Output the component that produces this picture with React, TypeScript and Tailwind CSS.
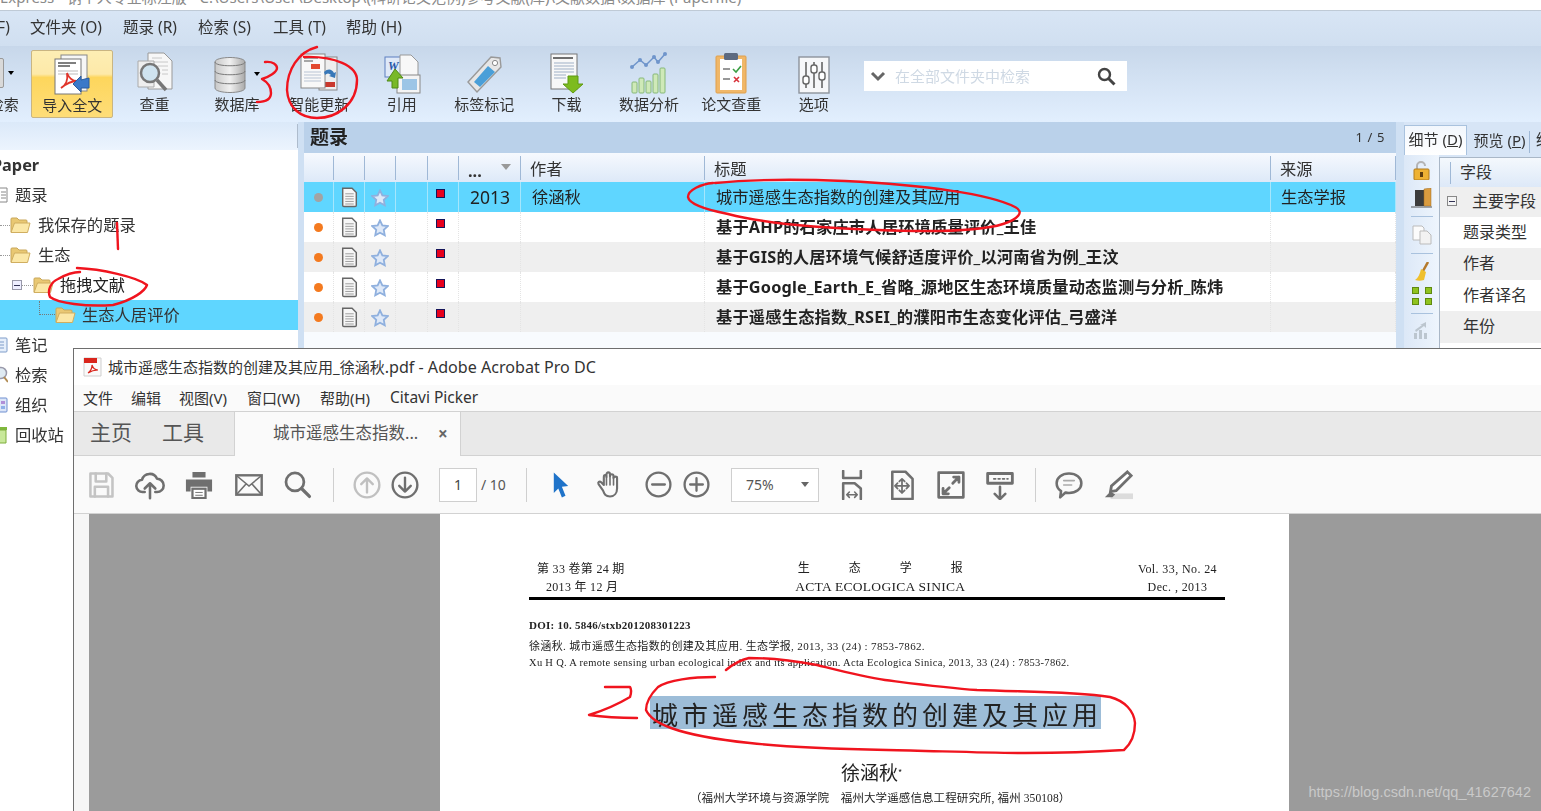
import React from "react";

const CN = "font-['Noto_Sans','Noto_Sans_CJK_SC',sans-serif]";

function Doc({ size = 20 }: { size?: number }) {
  return (
    <svg width={size} height={size * 1.2} viewBox="0 0 20 24">
      <path d="M2 1.500h11l5 5v15a1.500 1.500 0 0 1-1.500 1.500h-13A1.500 1.500 0 0 1 2 21.500z" fill="#f7f7f7" stroke="#666" strokeWidth="1.700" />
      <path d="M5 8h10M5 11h10M5 14h10M5 17h10M5 20h10" stroke="#999" strokeWidth="1.100" />
    </svg>
  );
}
function Star() {
  return (
    <svg width="18" height="18" viewBox="0 0 20 20">
      <path d="M10 1.500l2.600 5.600 6 .8-4.400 4.200 1.100 6L10 15.200l-5.300 2.900 1.100-6L1.400 7.900l6-.8z" fill="#dfe9f8" stroke="#8fb0de" strokeWidth="2" />
    </svg>
  );
}
function Folder() {
  return (
    <svg width="21" height="18" viewBox="0 0 21 18">
      <path d="M1 3a1 1 0 0 1 1-1h5l2 2h7a1 1 0 0 1 1 1v11H1z" fill="#e9c873" stroke="#c9a75a" />
      <path d="M4.500 7H20l-2.500 9.500H1z" fill="#fbe7a6" stroke="#d0ae60" />
    </svg>
  );
}
function RedFlag() {
  return <span className="block w-[9px] h-[9px] bg-[#e8001c] border border-[#16165a]" />;
}

function IcoImport() {
  return (
    <svg width="38" height="42" viewBox="0 0 38 42">
      <rect x="8" y="2" width="26" height="36" fill="#f6f6f6" stroke="#888" />
      <rect x="2" y="6" width="26" height="35" fill="#fff" stroke="#777" />
      <path d="M5 10h18M5 13h12" stroke="#555" strokeWidth="1.500" />
      <path d="M5 18h20M5 21h20" stroke="#bbb" />
      <path d="M8 35c5-3 7-9 6-15 2 5 5 8 10 8-5 0-10 2-16 7z" fill="none" stroke="#e0352b" strokeWidth="1.800" />
      <path d="M36 25v10h-8v4l-8-8 8-8v4z" fill="#3b79c9" stroke="#2a5c9e" />
    </svg>
  );
}
function IcoCheck() {
  return (
    <svg width="38" height="42" viewBox="0 0 38 42">
      <path d="M12 1h16l8 8v28H12z" fill="#f7f7f7" stroke="#999" />
      <path d="M16 6h10M16 10h16M22 14h10M26 18h6M26 22h6" stroke="#c8c8c8" />
      <path d="M2 9h16v26H2z" fill="#eee" stroke="#aaa" />
      <circle cx="14" cy="21" r="9" fill="#cfe3ef" stroke="#777" strokeWidth="2.500" />
      <path d="M21 28l9 10" stroke="#777" strokeWidth="3.500" />
    </svg>
  );
}
function IcoDb() {
  return (
    <svg width="32" height="38" viewBox="0 0 32 38">
      <defs>
        <linearGradient id="dbg" x1="0" x2="1">
          <stop offset="0" stopColor="#c8c8c8" />
          <stop offset="0.5" stopColor="#f0f0f0" />
          <stop offset="1" stopColor="#aaa" />
        </linearGradient>
      </defs>
      <path d="M1 6c0-6 30-6 30 0v26c0 6-30 6-30 0z" fill="url(#dbg)" stroke="#8a8a8a" />
      <path d="M1 6c0 5 30 5 30 0M1 15c0 5 30 5 30 0M1 24c0 5 30 5 30 0" fill="none" stroke="#7a7a7a" />
    </svg>
  );
}
function IcoUpdate() {
  return (
    <svg width="40" height="42" viewBox="0 0 40 42">
      <rect x="20" y="5" width="18" height="33" fill="#eee" stroke="#888" />
      <rect x="24" y="30" width="12" height="5" fill="#c9382c" />
      <rect x="2" y="2" width="24" height="34" fill="#f8f8f8" stroke="#888" />
      <path d="M5 6h14M5 9h9" stroke="#555" />
      <rect x="12" y="12" width="9" height="5" fill="#e2492f" />
      <path d="M5 20h17M5 23h17M5 26h17M5 29h17" stroke="#b9c4d4" />
      <path d="M25 20c4-4 8-3 10 1l2-1-1 6-6-2 2-1c-2-2-4-2-6 0z" fill="#3878b8" />
    </svg>
  );
}
function IcoCite() {
  return (
    <svg width="38" height="40" viewBox="0 0 38 40">
      <rect x="2" y="3" width="18" height="20" fill="#dfe9f8" stroke="#5c7fc0" />
      <text x="5" y="16" fontSize="12" fontWeight="700" fontStyle="italic" fill="#2857a8" fontFamily="Liberation Serif">W</text>
      <path d="M17 1h11l7 7v14H17z" fill="#f8f8f8" stroke="#999" />
      <rect x="14" y="21" width="23" height="18" fill="#f4f4f4" stroke="#888" />
      <rect x="19" y="25" width="15" height="11" fill="#9cc5e6" />
      <path d="M12 15l8 9h-5v10h-6v-7H4z" fill="#79b928" stroke="#4f8a16" />
    </svg>
  );
}
function IcoTag() {
  return (
    <svg width="38" height="40" viewBox="0 0 38 40">
      <path d="M3 28L26 3l9 1 1 9-24 25z" fill="#e6e6e6" stroke="#999" strokeWidth="1.400" />
      <circle cx="30" cy="9" r="2.600" fill="#fff" stroke="#888" />
      <path d="M9 28l14-16 7 6-15 15z" fill="#4a9fd8" />
    </svg>
  );
}
function IcoDownload() {
  return (
    <svg width="36" height="42" viewBox="0 0 36 42">
      <rect x="2" y="2" width="26" height="35" fill="#f8f8f8" stroke="#777" />
      <path d="M4 6h20" stroke="#333" strokeWidth="1.400" />
      <path d="M5 11h20M5 14h20M5 17h20M5 20h20M5 23h12M5 26h12" stroke="#9fb0c6" />
      <path d="M19 24h10v8h5l-10 9-10-9h5z" fill="#7dbb1e" stroke="#5f9a12" />
    </svg>
  );
}
function IcoChart() {
  return (
    <svg width="38" height="42" viewBox="0 0 38 42">
      <path d="M2 15l8-7 6 5 8-8 4 5 7-8" fill="none" stroke="#6f95cb" strokeWidth="1.500" />
      {[[2, 15], [10, 8], [16, 13], [24, 5], [28, 10], [35, 2]].map(([x, y]) => (
        <circle key={x} cx={x} cy={y} r="2" fill="#6f95cb" />
      ))}
      {[[2, 30], [9, 26], [16, 29], [23, 22], [30, 16]].map(([x, y]) => (
        <rect key={x} x={x} y={y} width="5" height={41 - y} rx="1" fill="#cfe9b8" stroke="#86b878" />
      ))}
    </svg>
  );
}
function IcoClip() {
  return (
    <svg width="32" height="42" viewBox="0 0 32 42">
      <rect x="1" y="4" width="30" height="37" rx="1" fill="#f0b768" stroke="#e09f4a" />
      <rect x="5" y="7" width="22" height="31" fill="#fff" />
      <rect x="9" y="1" width="14" height="7" rx="1.500" fill="#5d6a80" />
      <path d="M8 17h7M8 27h7" stroke="#777" strokeWidth="1.400" />
      <path d="M18 17l3 3 5-6" fill="none" stroke="#3c9f45" strokeWidth="1.600" />
      <path d="M19 25l5 5m0-5l-5 5" stroke="#d8323a" strokeWidth="1.600" />
    </svg>
  );
}
function IcoOpt() {
  return (
    <svg width="32" height="38" viewBox="0 0 32 38">
      <rect x="1" y="1" width="30" height="36" fill="#f6f7f9" stroke="#8d939c" strokeWidth="1.400" />
      <path d="M8 6v26M16 6v26M24 6v26" stroke="#666" strokeWidth="1.600" />
      <rect x="5" y="20" width="6" height="8" rx="2.500" fill="#fff" stroke="#666" strokeWidth="1.400" />
      <rect x="13" y="9" width="6" height="8" rx="2.500" fill="#fff" stroke="#666" strokeWidth="1.400" />
      <rect x="21" y="16" width="6" height="8" rx="2.500" fill="#fff" stroke="#666" strokeWidth="1.400" />
    </svg>
  );
}
function Caret() {
  return <span className="block w-0 h-0 border-x-[3.500px] border-x-transparent border-t-[4px] border-t-black" />;
}

function ToolBtn({ label, active, shift, children }: { label: string; active?: boolean; shift?: boolean; children?: React.ReactNode }) {
  return (
    <div
      className={`relative w-[82.4px] h-[68px] shrink-0 flex flex-col items-center rounded-[2px] ${
        active ? "bg-[linear-gradient(#fdeeb4_0%,#fde9a8_35%,#fdd65c_40%,#fedd78_100%)] border border-[#c9b582]" : ""
      }`}
    >
      <div className="h-[44px] w-full flex items-end justify-center">{children}</div>
      <div className={`text-[15px] leading-[20px] text-[#333] whitespace-nowrap ${shift ? "ml-[28px]" : ""}`}>{label}</div>
    </div>
  );
}

const treeRow = "h-[30px] flex items-center whitespace-nowrap text-[16.300px] text-[#333]";

function SideIco({ kind }: { kind: "list" | "note" | "search" | "org" | "bin" }) {
  return (
    <svg width="8" height="20" viewBox="0 0 8 20" className="shrink-0">
      {kind === "list" && <path d="M0 3h7v14H0M1 7h5M1 10h5M1 13h5" fill="#fff" stroke="#888" />}
      {kind === "note" && (
        <>
          <rect x="-4" y="3" width="11" height="14" rx="1" fill="#e6effb" stroke="#7f9cc9" />
          <path d="M0 7h4M0 10h4M0 13h4" stroke="#7f9cc9" />
        </>
      )}
      {kind === "search" && (
        <>
          <circle cx="1" cy="8" r="5.500" fill="#dfeaf2" stroke="#99a" strokeWidth="1.500" />
          <path d="M4 12l4 5" stroke="#b08a50" strokeWidth="2" />
        </>
      )}
      {kind === "org" && (
        <>
          <rect x="-4" y="3" width="11" height="14" rx="1" fill="#dce6f8" stroke="#6f8fd0" />
          <rect x="1" y="6" width="4" height="3" fill="#b08fd8" />
          <rect x="1" y="11" width="4" height="3" fill="#8fb0e8" />
        </>
      )}
      {kind === "bin" && (
        <>
          <rect x="-4" y="2" width="11" height="3" fill="#7fb83c" />
          <path d="M-3 5h9v13h-9z" fill="#c8e89a" stroke="#7fae3c" />
        </>
      )}
    </svg>
  );
}

const cols = [30, 31, 31, 32, 31, 62, 184, 566, 125];
const rows = [
  { title: "城市遥感生态指数的创建及其应用", year: "2013", author: "徐涵秋", src: "生态学报", sel: true },
  { title: "基于AHP的石家庄市人居环境质量评价_王佳" },
  { title: "基于GIS的人居环境气候舒适度评价_以河南省为例_王汶", alt: true },
  { title: "基于Google_Earth_E_省略_源地区生态环境质量动态监测与分析_陈炜" },
  { title: "基于遥感生态指数_RSEI_的濮阳市生态变化评估_弓盛洋", alt: true },
] as { title: string; year?: string; author?: string; src?: string; sel?: boolean; alt?: boolean }[];

function Stroke({ children, s = 30, c = "#6f6f6f" }: { children: React.ReactNode; s?: number; c?: string }) {
  return (
    <svg width={s} height={s} viewBox="0 0 34 34" fill="none" stroke={c} strokeWidth="2.900" strokeLinecap="round" strokeLinejoin="round">
      {children}
    </svg>
  );
}

function Box({ w, children }: { w: number; children?: React.ReactNode }) {
  return (
    <div className="shrink-0 flex items-center justify-center h-full" style={{ width: w }}>
      {children}
    </div>
  );
}
function Sep({ w }: { w: number }) {
  return (
    <Box w={w}>
      <span className="block w-px h-[34px] bg-[#cfcfcf]" />
    </Box>
  );
}

export default function App() {
  return (
    <div className={`relative w-[1541px] h-[811px] overflow-hidden bg-white ${CN}`}>
      <div className="h-full flex flex-col blur-[0.35px]">
        {/* Title strip */}
        <div className="h-[11px] shrink-0 overflow-hidden bg-white border-b border-[#bfcad6]">
          <div className="-mt-[13px] text-[15px] leading-[20px] text-[#8a8a8a] whitespace-nowrap">
            Express - 钠个人专业标注版 - C:\Users\User\Desktop\(科研论文范例)参考文献(库)\文献数据\数据库 (Paperfile)
          </div>
        </div>

        {/* Menu */}
        <div className="h-[35px] shrink-0 flex items-center pb-[2px] bg-[linear-gradient(#d8e5f5,#d0dff0)] text-[15.500px] text-[#333] whitespace-nowrap">
          <span className="-ml-[3px] w-[33px]">F)</span>
          <span className="w-[93px]">文件夹 (O)</span>
          <span className="w-[75px]">题录 (R)</span>
          <span className="w-[75px]">检索 (S)</span>
          <span className="w-[73px]">工具 (T)</span>
          <span>帮助 (H)</span>
        </div>

        {/* Toolbar */}
        <div className="h-[76px] shrink-0 flex items-start pt-[4px] bg-[linear-gradient(#c7d7ea,#e2effe)] -ml-[51.400px] w-[calc(100%+51.4px)]">
          <ToolBtn label="检索" shift>
            <div className="flex items-center gap-[4px] ml-[32px] mb-[6px]">
              <span className="block w-[6px] h-[30px] bg-[#d9d9d9] border border-[#999] rounded-r-[2px]" />
              <Caret />
            </div>
          </ToolBtn>
          <ToolBtn label="导入全文" active>
            <IcoImport />
          </ToolBtn>
          <ToolBtn label="查重">
            <IcoCheck />
          </ToolBtn>
          <ToolBtn label="数据库">
            <IcoDb />
            <div className="ml-[8px] mb-[18px]">
              <Caret />
            </div>
          </ToolBtn>
          <ToolBtn label="智能更新">
            <IcoUpdate />
          </ToolBtn>
          <ToolBtn label="引用">
            <IcoCite />
          </ToolBtn>
          <ToolBtn label="标签标记">
            <IcoTag />
          </ToolBtn>
          <ToolBtn label="下载">
            <IcoDownload />
          </ToolBtn>
          <ToolBtn label="数据分析">
            <IcoChart />
          </ToolBtn>
          <ToolBtn label="论文查重">
            <IcoClip />
          </ToolBtn>
          <ToolBtn label="选项">
            <IcoOpt />
          </ToolBtn>
          <div className="ml-[9px] mt-[11px] w-[263px] h-[30px] shrink-0 bg-white flex items-center pl-[6px] pr-[11px]">
            <svg width="16" height="12" viewBox="0 0 16 12" fill="none" stroke="#666" strokeWidth="3">
              <path d="M2 3l6 6 6-6" />
            </svg>
            <span className="ml-[9px] flex-1 text-[15px] text-[#cfd9e4]">在全部文件夹中检索</span>
            <svg width="19" height="19" viewBox="0 0 19 19" fill="none" stroke="#444" strokeWidth="2.400">
              <circle cx="7.500" cy="7.500" r="5.500" />
              <path d="M11.500 11.500l6 6" strokeWidth="3" />
            </svg>
          </div>
        </div>

        {/* Content */}
        <div className="flex-1 flex min-h-0">
          {/* Left tree */}
          <div className="w-[298px] shrink-0 flex flex-col bg-white">
            <div className="h-[28px] shrink-0 bg-[linear-gradient(#dbe9f9,#ecf4fe)] flex justify-end items-center">
              <span className="block w-px h-[24px] bg-[#aebccd]" />
            </div>
            <div className={`${treeRow} font-bold -ml-[8px]`}>Paper</div>
            <div className={treeRow}>
              <SideIco kind="list" />
              <span className="ml-[7px]">题录</span>
            </div>
            <div className={treeRow}>
              <span className="block w-[10px] border-t border-dotted border-[#999]" />
              <Folder />
              <span className="ml-[7px]">我保存的题录</span>
            </div>
            <div className={treeRow}>
              <span className="block w-[10px] border-t border-dotted border-[#999]" />
              <Folder />
              <span className="ml-[7px]">生态</span>
            </div>
            <div className={treeRow}>
              <span className="ml-[12px] w-[10px] h-[10px] border border-[#99a] bg-[#eef] flex items-center justify-center">
                <span className="block w-[6px] h-px bg-[#335]" />
              </span>
              <span className="block w-[11px] border-t border-dotted border-[#999]" />
              <Folder />
              <span className="ml-[6px] text-[#222]">拖拽文献</span>
            </div>
            <div className={`${treeRow} bg-[#5fd6ff]`}>
              <span className="ml-[39px] w-[16px] h-[14px] -mt-[14px] border-l border-b border-dotted border-[#777]" />
              <Folder />
              <span className="ml-[6px]">生态人居评价</span>
            </div>
            <div className={treeRow}>
              <SideIco kind="note" />
              <span className="ml-[7px]">笔记</span>
            </div>
            <div className={treeRow}>
              <SideIco kind="search" />
              <span className="ml-[7px]">检索</span>
            </div>
            <div className={treeRow}>
              <SideIco kind="org" />
              <span className="ml-[7px]">组织</span>
            </div>
            <div className={treeRow}>
              <SideIco kind="bin" />
              <span className="ml-[7px]">回收站</span>
            </div>
          </div>

          <div className="w-[6px] shrink-0 bg-[#cfe0f3]" />

          {/* Center list */}
          <div className="w-[1092px] shrink-0 flex flex-col bg-[#f8fbfe]">
            <div className="h-[31px] shrink-0 bg-[#bad1ea] flex items-center justify-between pl-[6px] pr-[11px]">
              <span className="text-[19px] font-bold text-[#222]">题录</span>
              <span className="text-[13px] tracking-[.6px] text-[#333]">1 / 5</span>
            </div>
            <div className="h-[29px] shrink-0 flex bg-[linear-gradient(#f6f9fe,#dde9f8)] text-[16.300px] text-[#333]">
              {cols.map((w, i) => (
                <div key={i} className="relative h-full flex items-end pb-[2px]" style={{ width: w }}>
                  <span className="absolute right-0 top-[3px] bottom-[2px] w-px bg-[#9fb8d6]" />
                  {i === 5 && (
                    <>
                      <span className="ml-[9px] font-bold leading-[18px] text-[#333]">...</span>
                      <span className="absolute right-[10px] top-[11px] w-0 h-0 border-x-[5px] border-x-transparent border-t-[6px] border-t-[#999]" />
                    </>
                  )}
                  {i === 6 && <span className="ml-[9px] leading-[22px]">作者</span>}
                  {i === 7 && <span className="ml-[9px] leading-[22px]">标题</span>}
                  {i === 8 && <span className="ml-[9px] leading-[22px]">来源</span>}
                </div>
              ))}
            </div>
            {rows.map((r, idx) => (
              <div
                key={idx}
                className={`h-[30px] shrink-0 flex text-[16.300px] text-[#222] whitespace-nowrap ${r.sel ? "bg-[#5fd6ff]" : r.alt ? "bg-[#efefef]" : "bg-white"}`}
              >
                {cols.map((w, i) => (
                  <div
                    key={i}
                    className={`h-full flex items-center pt-px border-r ${r.sel ? "border-[#a5e6fc]" : "border-dotted border-[#e4e4e4]"} ${
                      i < 5 ? "justify-center" : ""
                    } ${i === 4 ? "pb-[9px] pr-[6px]" : ""}`}
                    style={{ width: w }}
                  >
                    {i === 0 && (
                      <span className={`block w-[9px] h-[9px] rounded-full ${r.sel ? "bg-[#a3a3a3]" : "bg-[#f47a1f]"}`} />
                    )}
                    {i === 1 && <Doc size={17} />}
                    {i === 2 && <Star />}
                    {i === 4 && <RedFlag />}
                    {i === 5 && r.year && <span className="ml-[11px] text-[17.500px]">{r.year}</span>}
                    {i === 6 && r.author && <span className="ml-[11px]">{r.author}</span>}
                    {i === 7 && <span className={`ml-[11px] ${r.sel ? "" : "font-bold tracking-[.15px]"}`}>{r.title}</span>}
                    {i === 8 && r.src && <span className="ml-[10px]">{r.src}</span>}
                  </div>
                ))}
              </div>
            ))}
          </div>

          <div className="w-[8px] shrink-0 bg-[#cfe0f3]" />

          {/* Right panel */}
          <div className="flex-1 flex flex-col bg-[#d7e5f6] min-w-0 overflow-hidden">
            <div className="h-[33px] shrink-0 flex items-end text-[15px] text-[#333] whitespace-nowrap pt-[3px]">
              <div className="w-[63px] h-full shrink-0 pb-[3px] bg-[linear-gradient(#f2f7fd,#fff)] border border-b-0 border-[#a9c2de] flex items-center justify-center">
                <span>
                  细节 (<span className="underline">D</span>)
                </span>
              </div>
              <div className="ml-[3px] w-[59px] h-[27px] shrink-0 pb-[3px] flex items-center justify-center">
                <span>
                  预览 (<span className="underline">P</span>)
                </span>
              </div>
              <span className="w-px h-[22px] shrink-0 bg-[#9fb8d6] mb-[2px]" />
              <span className="ml-[6px] mb-[5px] shrink-0">统计</span>
            </div>
            <div className="flex-1 flex min-h-0">
              <div className="w-[35px] shrink-0 flex flex-col items-center bg-[linear-gradient(90deg,#dce8f7,#eef5fd)] gap-[8px] pt-[6px]">
                <svg width="17" height="19" viewBox="0 0 17 19">
                  <path d="M4 8V5a4 4 0 0 1 8 0" fill="none" stroke="#b4b4b4" strokeWidth="2" />
                  <rect x="1" y="8" width="15" height="11" rx="1" fill="#eeb234" stroke="#b07a1c" />
                  <rect x="7" y="11" width="3" height="5" fill="#5c3d10" />
                </svg>
                <svg width="21" height="20" viewBox="0 0 21 20">
                  <rect x="4" y="2" width="12" height="16" fill="#3c3c3c" />
                  <path d="M13 1l7-1v18h-7z" fill="#d99b3f" stroke="#a06d20" strokeWidth=".5" />
                  <path d="M0 19h21" stroke="#555" />
                </svg>
                <span className="block w-[22px] h-px bg-[#a9c2de]" />
                <svg width="20" height="20" viewBox="0 0 20 20">
                  <path d="M1 1h9l2 2v12H1z" fill="#fbfbfb" stroke="#bbb" />
                  <path d="M8 6h7l4 4v9H8z" fill="#f2f2f2" stroke="#bbb" />
                </svg>
                <span className="block w-[22px] h-px bg-[#a9c2de]" />
                <svg width="14" height="19" viewBox="0 0 14 19">
                  <path d="M13 0L8 9" stroke="#b57a2c" strokeWidth="2.500" />
                  <path d="M6 7l5 3-2 8c-3 1-6 1-9 0 3-2 5-6 6-11z" fill="#efc02e" />
                </svg>
                <div className="grid grid-cols-2 gap-x-[6px] gap-y-[4px] -mt-[2px]">
                  <span className="block w-[7px] h-[7px] bg-[#8fc31f] border border-[#5f8a10]" />
                  <span className="block w-[7px] h-[7px] bg-[#8fc31f] border border-[#5f8a10]" />
                  <span className="block w-[7px] h-[7px] bg-[#8fc31f] border border-[#5f8a10]" />
                  <span className="block w-[7px] h-[7px] bg-[#8fc31f] border border-[#5f8a10]" />
                </div>
                <span className="block w-[22px] h-px bg-[#a9c2de]" />
                <svg width="18" height="18" viewBox="0 0 18 18">
                  <path d="M1 17V11h3v6zm5 0V8h3v9zm5 0V11h3v6z" fill="#bcc6cf" />
                  <path d="M2 8l7-5h-2l6-3v6l-2-2-8 6z" fill="#bcc6cf" />
                </svg>
              </div>
              <div className="flex-1 border-l border-t border-[#a9b7c7] bg-white text-[16px] text-[#333] whitespace-nowrap mt-[2px]">
                <div className="h-[29px] flex items-center bg-[linear-gradient(#f4f8fd,#dde9f8)] pl-[10px]">
                  <span className="block w-px h-[22px] bg-[#9fb8d6]" />
                  <span className="ml-[9px] -mt-[2px]">字段</span>
                </div>
                <div className="h-[30px] flex items-center bg-[#efefef] pl-[7px] pb-[2px]">
                  <span className="w-[10px] h-[10px] border border-[#888] bg-[#f4f4f4] flex items-center justify-center">
                    <span className="block w-[6px] h-px bg-[#335]" />
                  </span>
                  <span className="ml-[15px]">主要字段</span>
                </div>
                <div className="h-[31px] flex items-center pl-[23px] pb-[2px]">题录类型</div>
                <div className="h-[32px] flex items-center pl-[23px] pb-[2px] bg-[#efefef]">作者</div>
                <div className="h-[31px] flex items-center pl-[23px] pb-[2px]">作者译名</div>
                <div className="h-[32px] flex items-center pl-[23px] pb-[2px] bg-[#efefef]">年份</div>
              </div>
            </div>
          </div>
        </div>
      </div>

      {/* Acrobat window */}
      <div className="absolute left-[73px] top-[348px] right-0 bottom-0 flex flex-col bg-white border-l border-t border-[#6e6e6e] text-[#333]">
        <div className="h-[36px] shrink-0 flex items-center pl-[9px] text-[15px] whitespace-nowrap">
          <svg width="19" height="20" viewBox="0 0 19 20">
            <path d="M1 1h17v18H1z" fill="#fafafa" stroke="#cfcfcf" />
            <rect x="1" y="1" width="13" height="5" fill="#d9251c" />
            <path d="M5 16c3-2 4-5 4-8 1 3 3 5 6 5-3 0-7 1-10 3z" fill="none" stroke="#d9251c" strokeWidth="1.200" />
          </svg>
          <span className="ml-[6px]">
            城市遥感生态指数的创建及其应用_徐涵秋<span className="text-[16.100px]">.pdf - Adobe Acrobat Pro DC</span>
          </span>
        </div>
        <div className="h-[26px] shrink-0 flex items-center bg-[#fafafa] text-[15px] whitespace-nowrap">
          <span className="ml-[9px] w-[48px]">文件</span>
          <span className="w-[48px]">编辑</span>
          <span className="w-[68px]">视图(V)</span>
          <span className="w-[73px]">窗口(W)</span>
          <span className="w-[70px]">帮助(H)</span>
          <span className="text-[15.500px]">Citavi Picker</span>
        </div>
        <div className="h-[45px] shrink-0 flex bg-[#e9e9e9] border-t border-b border-[#d2d2d2] whitespace-nowrap">
          <div className="w-[160px] flex items-center pb-[2px] text-[21px] text-[#555]">
            <span className="ml-[16px] w-[72px]">主页</span>
            <span>工具</span>
          </div>
          <div className="w-[227px] -mb-px pb-[2px] bg-[#fafafa] border-x border-[#d2d2d2] flex items-center text-[16.500px] text-[#555]">
            <span className="ml-[38px] w-[165px]">城市遥感生态指数...</span>
            <span className="text-[17px] font-bold text-[#666] leading-none">×</span>
          </div>
        </div>
        <div className="h-[58px] shrink-0 flex items-center pl-[8px] bg-[#fafafa] border-b border-[#d2d2d2] whitespace-nowrap">
          <Box w={38}>
            <Stroke c="#c4c4c4">
              <path d="M5 4h20l5 5v21H5z" />
              <path d="M11 4v9h12V4M10 30V19h15v11" />
            </Stroke>
          </Box>
          <Box w={60}>
            <Stroke>
              <path d="M11 25H9a7 7 0 0 1-1-14 9 9 0 0 1 17-1 7.500 7.500 0 0 1 0 15h-2" />
              <path d="M17 32V15m-6 6l6-6 6 6" />
            </Stroke>
          </Box>
          <Box w={38}>
            <svg width="28" height="28" viewBox="0 0 30 30">
              <path d="M8 1h14v6H8zM1 9h28v13h-5v-5H6v5H1z" fill="#6f6f6f" />
              <rect x="8" y="19" width="14" height="10" fill="#fff" stroke="#6f6f6f" strokeWidth="2.400" />
              <path d="M11 23h8M11 26h8" stroke="#6f6f6f" />
            </svg>
          </Box>
          <Box w={62}>
            <svg width="28" height="22" viewBox="0 0 28 22" fill="none" stroke="#6f6f6f">
              <rect x="1.300" y="1.300" width="25.400" height="19.400" strokeWidth="2.400" />
              <path d="M2 2l12 10L26 2M2 20l9-10M26 20l-9-10" strokeWidth="1.600" />
            </svg>
          </Box>
          <Box w={34}>
            <Stroke s={29}>
              <circle cx="14" cy="14" r="10.500" strokeWidth="3.200" />
              <path d="M22 22l9 9" strokeWidth="3.800" />
            </Stroke>
          </Box>
          <Sep w={38} />
          <Box w={30}>
            <Stroke s={28} c="#c0c0c0">
              <circle cx="17" cy="17" r="15" />
              <path d="M17 26V9m-7 7l7-7 7 7" />
            </Stroke>
          </Box>
          <Box w={46}>
            <Stroke s={28}>
              <circle cx="17" cy="17" r="15" />
              <path d="M17 8v17m-7-7l7 7 7-7" />
            </Stroke>
          </Box>
          <div className="ml-[11px] w-[38px] h-[34px] shrink-0 bg-white border border-[#cfcfcf] flex items-center justify-center text-[14px] text-[#444]">1</div>
          <span className="ml-[4px] w-[26px] shrink-0 text-[14px] text-[#555]">/ 10</span>
          <Sep w={38} />
          <Box w={32}>
            <svg width="18" height="28" viewBox="0 0 20 30">
              <path d="M2 1l16 15-7 1 4 10-4 2-4-10-5 5z" fill="#1f73c9" />
            </svg>
          </Box>
          <Box w={66}>
            <Stroke>
              <path d="M9 23l-5-7c-1-2 1-4 3-2l3 3V8c0-3 3-3 3 0V5c0-3 4-3 4 0v2c0-3 4-3 4 0v2c0-2 4-2 4 0v12c0 5-3 9-8 9s-6-2-8-7z" strokeWidth="2.400" />
              <path d="M13 8v9M17 7v10M21 8v9" strokeWidth="1.800" />
            </Stroke>
          </Box>
          <Box w={30}>
            <Stroke s={27}>
              <circle cx="17" cy="17" r="15" />
              <path d="M9 17h16" />
            </Stroke>
          </Box>
          <Box w={46}>
            <Stroke s={27}>
              <circle cx="17" cy="17" r="15" />
              <path d="M9 17h16M17 9v16" />
            </Stroke>
          </Box>
          <div className="ml-[12px] w-[88px] h-[34px] shrink-0 bg-white border border-[#cfcfcf] flex items-center pl-[14px] text-[14px] text-[#555]">
            <span className="flex-1">75%</span>
            <span className="mr-[9px] w-0 h-0 border-x-[4px] border-x-transparent border-t-[5px] border-t-[#666]" />
          </div>
          <Box w={66}>
            <Stroke>
              <path d="M7 1v8h20V1" />
              <path d="M7 33V15h13l7 6v12" />
              <path d="M11 28h12m-9-3l-3 3 3 3m6-6l3 3-3 3" strokeWidth="1.800" />
            </Stroke>
          </Box>
          <Box w={34}>
            <Stroke>
              <path d="M6 2h15l8 8v23H6z" />
              <path d="M17 10v16m-7-8h14M14 13l3-3 3 3M14 23l3 3 3-3M12 15l-3 3 3 3M22 15l3 3-3 3" strokeWidth="2" />
            </Stroke>
          </Box>
          <Box w={64}>
            <Stroke>
              <rect x="3" y="3" width="28" height="28" strokeWidth="3" />
              <path d="M19 15l7-7m-6 0h6v6M15 20l-7 7m6 0H8v-6" strokeWidth="3.200" />
            </Stroke>
          </Box>
          <Box w={34}>
            <Stroke>
              <rect x="3" y="4" width="28" height="11" strokeWidth="3.200" />
              <path d="M10 10h2M15 10h2M20 10h2M25 10h1" strokeWidth="2" />
              <path d="M17 19v14m-6-6l6 6 6-6" />
            </Stroke>
          </Box>
          <Sep w={36} />
          <Box w={32}>
            <Stroke>
              <path d="M17 4c8 0 14 4.500 14 11s-6 11-14 11c-1 0-3 0-4-.5L7 31l1-7c-3-2-5-5-5-9C3 8.500 9 4 17 4z" />
              <path d="M11 12h12M11 17h9" strokeWidth="1.800" stroke="#aaa" />
            </Stroke>
          </Box>
          <Box w={66}>
            <svg width="30" height="30" viewBox="0 0 32 32">
              <rect x="8" y="25" width="24" height="6" fill="#dcdcdc" />
              <path d="M26 2l4 4-16 16-6 1 1-6z" fill="#fff" stroke="#6f6f6f" strokeWidth="3" />
              <path d="M8 23l-6 6h8l3-3z" fill="#6f6f6f" />
            </svg>
          </Box>
        </div>

        {/* Document */}
        <div className="flex-1 flex min-h-0">
          <div className="w-[15px] shrink-0 bg-[#f6f6f6]" />
          <div className="w-[351px] shrink-0 bg-[#9b9b9b]" />
          <div className="w-[849px] shrink-0 bg-white pl-[89px] pr-[64px] pt-[46px] font-['Liberation_Serif','Noto_Sans_CJK_SC',serif] text-[#222] whitespace-nowrap overflow-hidden blur-[0.3px]">
            <div className="relative h-[37px] border-b-[3px] border-black box-content pb-0">
              <div className="flex justify-between h-full">
                <div className="ml-[8px] text-[12px] tracking-[.3px] leading-[18px]">
                  <div>第 33 卷第 24 期</div>
                  <div className="ml-[9px]">2013 年 12 月</div>
                </div>
                <div className="mr-[2px] text-center leading-[18px] -mt-[1px]">
                  <div className="text-[12px] tracking-[39px] -mr-[39px]">生态学报</div>
                  <div className="text-[13.500px] mt-px tracking-[.3px]">ACTA ECOLOGICA SINICA</div>
                </div>
                <div className="text-[12px] tracking-[.4px] leading-[18px] text-center mr-[8px]">
                  <div>Vol. 33, No. 24</div>
                  <div>Dec. , 2013</div>
                </div>
              </div>
            </div>
            <div className="mt-[18px] text-[11px] tracking-[.25px] font-bold leading-[14px]">DOI: 10. 5846/stxb201208301223</div>
            <div className="mt-[7px] text-[11px] tracking-[.35px] leading-[14px]">徐涵秋. 城市遥感生态指数的创建及其应用. 生态学报, 2013, 33 (24) : 7853-7862.</div>
            <div className="mt-[3px] text-[10.500px] leading-[14px] tracking-[.3px]">
              Xu H Q. A remote sensing urban ecological index and its application. Acta Ecologica Sinica, 2013, 33 (24) : 7853-7862.
            </div>
            <div className="mt-[26px] ml-[121px] w-[451px] h-[33px] pt-[3px] pl-[3px] bg-[#9dbdd8] flex items-center justify-center font-['Noto_Sans_CJK_SC',sans-serif] text-[26px] tracking-[4px] leading-none text-[#222]">
              城市遥感生态指数的创建及其应用
            </div>
            <div className="mt-[31px] ml-[312px] text-[19px] leading-[24px] font-['Noto_Sans_CJK_SC',sans-serif]">
              徐涵秋<sup className="text-[9px]">*</sup>
            </div>
            <div className="mt-[6px] ml-[161px] text-[11.500px] tracking-[.1px] leading-[16px]">（福州大学环境与资源学院　福州大学遥感信息工程研究所, 福州 350108）</div>
          </div>
          <div className="flex-1 bg-[#9b9b9b]" />
        </div>
      </div>

      {/* Watermark */}
      <div className="absolute right-[10px] bottom-[9px] text-[14.500px] leading-[20px] text-[#c9c9c9] font-['Liberation_Sans',sans-serif] whitespace-nowrap">
        https://blog.csdn.net/qq_41627642
      </div>

      {/* Red pen annotations */}
      <svg className="absolute inset-0 pointer-events-none" width="1541" height="811" viewBox="0 0 1541 811" fill="none" stroke="#f0141e" strokeWidth="2.400" strokeLinecap="round" strokeLinejoin="round">
        <path d="M317 47C298 52 287 70 287 90c1 18 14 28 30 28 20 0 40-14 40-38 0-14-22-24-53-23" />
        <path d="M265 62c8-1 12 3 12 6 0 4-8 9-15 11 7 4 9 9 9 14 0 6-5 9-14 9" />
        <path d="M117 223l1 26" />
        <path d="M77 268c24 1 60 9 70 17-2 6-14 15-34 20-28 2-55-2-63-8-3-7 1-15 8-18 7-4 14-7 22-7" />
        <path d="M713 183c-12 1-25 7-25 14 1 7 20 13 40 17 35 9 90 14 150 16 50 2 100 2 125-6 15-5 22-12 12-17-25-13-90-22-170-26-50-2-100-1-130 2" />
        <path d="M715 677c-22 0-47 3-57 10-7 7-12 16-12 23 4 9 14 14 25 18 22 8 50 12 79 15 45 5 90 6 137 7 50 1 100 3 138 3 30 0 68-1 99-3 9-8 11-18 11-27-1-12-10-22-25-26-38-6-85-5-133-7-30-2-60-6-92-10-22-3-48-10-68-15-22-4-50-7-68-7-9 2-17 7-23 12" />
        <path d="M605 687h25c2 3 1 7 0 10-10 6-28 14-41 18 14 2 32 3 48 3" />
      </svg>
    </div>
  );
}
